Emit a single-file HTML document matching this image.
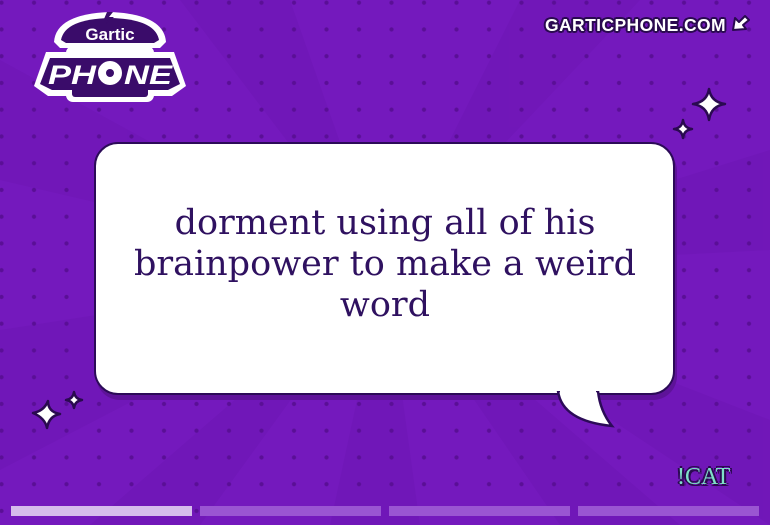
<!DOCTYPE html>
<html><head><meta charset="utf-8"><style>
html,body{margin:0;padding:0}
body{width:770px;height:525px;overflow:hidden;position:relative;background:#7419bd;font-family:"Liberation Sans",sans-serif}
.rays{position:absolute;inset:0}
.dots{position:absolute;inset:0;background-image:radial-gradient(circle,#5a0f96 1.8px,transparent 2.4px);background-size:32.5px 26.75px;background-position:-14.75px -10.7px}
.bubble{position:absolute;left:94px;top:142px;width:577px;height:249px;background:#fff;border:2.5px solid #2c0b58;border-radius:24px;box-shadow:2px 5px 0 #5e1399}
.txt{position:absolute;left:94px;top:203px;width:582px;text-align:center;font-family:"DejaVu Serif","Liberation Serif",serif;font-size:35px;line-height:41px;color:#2f1160}
.bar{position:absolute;top:506px;height:10px;width:181px;background:#9a55d2}
.site{position:absolute;left:545px;top:15px;font-weight:bold;font-size:17.5px;color:#fff;letter-spacing:0.4px;text-shadow:-2px 0 #2a0a50,2px 0 #2a0a50,0 -2px #2a0a50,0 2px #2a0a50,-1.5px -1.5px #2a0a50,1.5px 1.5px #2a0a50,-1.5px 1.5px #2a0a50,1.5px -1.5px #2a0a50}
.cat{position:absolute;left:677px;top:464px;font-family:"Liberation Serif",serif;font-size:24px;color:#7fe0c8;text-shadow:-2px 0 #2a0a50,2px 0 #2a0a50,0 -2px #2a0a50,0 2px #2a0a50,2px 2px #2a0a50}
</style></head><body>
<svg class="rays" width="770" height="525">
<g fill="#6a14ad" opacity="0.3">
<polygon points="385,270 0,60 0,180"/>
<polygon points="385,270 0,330 0,470"/>
<polygon points="385,270 90,525 200,525"/>
<polygon points="385,270 330,525 420,525"/>
<polygon points="385,270 560,525 680,525"/>
<polygon points="385,270 770,420 770,525"/>
<polygon points="385,270 770,150 770,250"/>
<polygon points="385,270 520,0 640,0"/>
<polygon points="385,270 180,0 290,0"/>
</g>
</svg>
<div class="dots"></div>
<svg style="position:absolute;left:30px;top:8px" width="160" height="96" viewBox="0 0 160 96">
<path d="M24 34 Q26 6 80 4 Q134 6 136 34 L130 40 L30 40 Z" fill="#fff"/>
<path d="M31 32 Q35 11 80 10 Q125 11 129 32 L124 35 L36 35 Z" fill="#3a0c6a"/>
<path d="M4 78 L16 44 L144 44 L156 78 L142 88 L18 88 Z" fill="#fff"/>
<rect x="36" y="38" width="88" height="56" rx="7" fill="#fff"/>
<rect x="42" y="78" width="76" height="11" rx="3" fill="#3a0c6a"/>
<path d="M10 76 L20 50 L140 50 L150 76 L138 82 L22 82 Z" fill="#3a0c6a"/>
<path d="M77 4 L83 4 L79 9 L84 9 L76 16 L78 11 L74 11 Z" fill="#3a0c6a"/>
<text x="80" y="32" text-anchor="middle" font-family="Liberation Sans" font-weight="bold" font-size="17" fill="#fff">Gartic</text>
<text x="18" y="76" font-family="Liberation Sans" font-weight="bold" font-style="italic" font-size="27" fill="#fff" textLength="48" lengthAdjust="spacingAndGlyphs">PH</text>
<circle cx="80" cy="65" r="12" fill="#fff"/><circle cx="80" cy="65" r="4" fill="#3a0c6a"/>
<text x="94" y="76" font-family="Liberation Sans" font-weight="bold" font-style="italic" font-size="27" fill="#fff" textLength="48" lengthAdjust="spacingAndGlyphs">NE</text>
</svg>
<div class="site">GARTICPHONE.COM</div>
<svg style="position:absolute;left:730px;top:14px" width="22" height="20"><path d="M3 16 L5 4 L9 8 L15 2 L19 6 L13 11 L16 15 Z" fill="#fff" stroke="#2a0a50" stroke-width="2" stroke-linejoin="round"/></svg>
<svg style="position:absolute;left:0;top:0" width="770" height="525">
<g fill="#fff" stroke="#2a0a50" stroke-width="2.5" stroke-linejoin="round">
<path d="M709 89 Q711 102 725 104 Q711 106 709 120 Q707 106 693 104 Q707 102 709 89Z"/>
<path d="M683 120 Q684 128 692 129 Q684 130 683 138 Q682 130 674 129 Q682 128 683 120Z"/>
<path d="M48 401 Q48 412 60 414 Q49 416 47 428 Q45 418 33 413 Q44 411 48 401Z"/>
<path d="M74 392 Q75 399 82 400 Q75 401 74 408 Q73 401 66 400 Q73 399 74 392Z"/>
</g>
</svg>
<div class="bubble"></div>
<svg style="position:absolute;left:550px;top:391px" width="70" height="42"><path d="M8 0 Q12 30 62 35 Q50 20 48 0 Z" fill="#fff" stroke="#2c0b58" stroke-width="2.5"/><rect x="10" y="0" width="36" height="2" fill="#fff"/></svg>
<div class="txt">dorment using all of his<br>brainpower to make a weird<br>word</div>
<div class="cat">!CAT</div>
<div class="bar" style="left:11px;background:#d6bcec"></div>
<div class="bar" style="left:200px"></div>
<div class="bar" style="left:389px"></div>
<div class="bar" style="left:578px"></div>
</body></html>
